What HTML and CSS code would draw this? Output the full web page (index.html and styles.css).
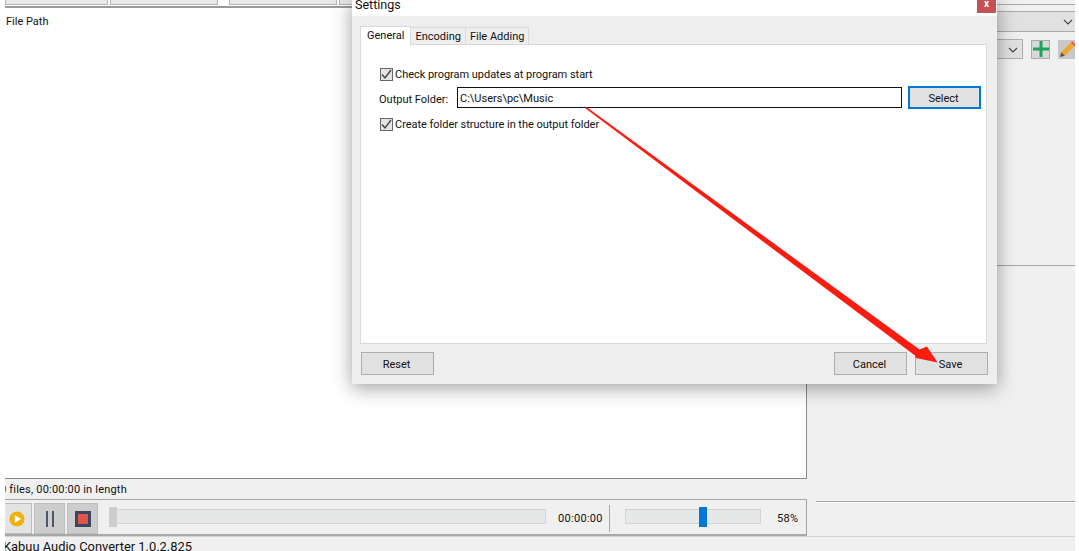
FILE: index.html
```html
<!DOCTYPE html>
<html lang="en">
<head>
<meta charset="utf-8">
<title>Kabuu Audio Converter</title>
<link rel="stylesheet" href="styles.css">
</head>
<body>
<div class="app">
  <div class="main">
    <section class="left">
      <div class="col-head">
        <span class="col w103"></span><span class="col w108"></span><span class="col-gap"></span><span class="col w108"></span><span class="col grow"></span>
      </div>
      <div class="list"><span class="col-title">File Path</span></div>
      <div class="files"><span class="files-text">0 files, 00:00:00 in length</span></div>
      <div class="player">
        <button class="pbtn play" aria-label="Play"><svg width="16" height="16" viewBox="0 0 18 18"><circle cx="9" cy="9" r="8.500" fill="#eeb111"/><path d="M6.5 4.5 13.500 9 6.500 13.500Z" fill="#fff"/></svg></button>
        <button class="pbtn" aria-label="Pause"><svg width="12" height="18" viewBox="0 0 12 18"><path d="M2 1h2v16H2zM8 1h2v16H8z" fill="#4a5568"/></svg></button>
        <button class="pbtn" aria-label="Stop"><svg width="16" height="16" viewBox="0 0 16 16"><rect x="1.500" y="1.500" width="13" height="13" fill="#e0574a" stroke="#3d4660" stroke-width="3"/></svg></button>
        <div class="track seek"><span class="seek-thumb"></span></div>
        <span class="time">00:00:00</span>
        <span class="vsep"></span>
        <div class="track volume"><span class="vol-thumb"></span></div>
        <span class="pct">58%</span>
      </div>
    </section>
    <aside class="right">
      <div class="rule-top"></div>
      <div class="select wide"><svg class="chev" width="10" height="6" viewBox="0 0 10 6"><path d="M1 1l4 4 4-4" fill="none" stroke="#444" stroke-width="1.1"/></svg></div>
      <div class="tools">
        <div class="select narrow"><svg class="chev" width="10" height="6" viewBox="0 0 10 6"><path d="M1 1l4 4 4-4" fill="none" stroke="#444" stroke-width="1.1"/></svg></div>
        <span class="tool"><svg width="16" height="16" viewBox="0 0 16 16"><path d="M6.500 0h3v6.500H16v3H9.500V16h-3V9.500H0v-3h6.500Z" fill="#1fa35b"/></svg></span>
        <span class="tool clipped"><svg width="17" height="17" viewBox="0 0 17 17"><path d="M1 16l1.300-4.800L12 1.500l3.500 3.500-9.700 9.700Z" fill="#f3a42c"/><path d="M12 1.500l1.300-1.300 3.500 3.500-1.300 1.300Z" fill="#d9534f"/><path d="M1 16l1.300-4.800 3.500 3.500Z" fill="#555"/></svg></span>
      </div>
      <div class="rule-mid"></div>
      <div class="rule-low"></div>
    </aside>
  </div>
  <footer class="bottom"><span class="version">Kabuu Audio Converter 1.0.2.825</span><span class="grip"></span></footer>
</div>

<div class="dialog">
  <div class="titlebar"><span class="dtitle">Settings</span><span class="close">x</span></div>
  <div class="dbody">
    <div class="tabs">
      <span class="tab active">General</span><span class="tab">Encoding</span><span class="tab">File Adding</span>
    </div>
    <div class="panel">
      <label class="check"><span class="box"><svg width="13" height="13" viewBox="0 0 13 13"><path d="M2 6.500 5 10l6-8" fill="none" stroke="#444" stroke-width="1.400"/></svg></span>Check program updates at program start</label>
      <div class="folder">
        <span class="flabel">Output Folder:</span>
        <span class="path">C:\Users\pc\Music</span>
        <button class="btn select-btn">Select</button>
      </div>
      <label class="check"><span class="box"><svg width="13" height="13" viewBox="0 0 13 13"><path d="M2 6.500 5 10l6-8" fill="none" stroke="#444" stroke-width="1.400"/></svg></span>Create folder structure in the output folder</label>
    </div>
    <div class="actions">
      <button class="btn">Reset</button>
      <span class="spacer"></span>
      <button class="btn">Cancel</button>
      <button class="btn">Save</button>
    </div>
  </div>
</div>

<svg class="arrow" width="1079" height="551" viewBox="0 0 1079 551"><path d="M585 108 586.500 107 919.500 349.500 927 346.500 937.500 362.500 916 358 915 355.500 Z" fill="#fb1c10"/></svg>
</body>
</html>
```

FILE: styles.css
```css
* { box-sizing: border-box; }
html, body { margin: 0; height: 100%; }
body {
  width: 1079px;
  height: 551px;
  overflow: hidden;
  background: #fff;
  font-family: Roboto, "Liberation Sans", sans-serif;
  font-size: 11px;
  color: #111;
}
button { font: inherit; color: inherit; padding: 1px 2px 0 0; }

.app { width: 1070px; height: 551px; margin-left: 5px; background: #f0f0f0; display: flex; flex-direction: column; overflow: hidden; }
.main { height: 536px; display: flex; }

.left { width: 802px; flex: none; display: flex; flex-direction: column; }
.col-head { height: 8px; display: flex; gap: 2px; border-bottom: 2px solid #9a9a9a; background: #fff; }
.col { height: 5px; background: #e8e8e8; border: 1px solid #b5b5b5; border-top: 0; }
.w103 { width: 103px; }
.w108 { width: 108px; }
.col-gap { width: 7px; }
.grow { flex: 1; }
.list { flex: 1; background: #fff; border-right: 1px solid #8a8a8a; border-bottom: 1px solid #8a8a8a; padding: 6px 1px; line-height: 16px; }
.files { height: 21px; padding-top: 1px; line-height: 20px; border-bottom: 1px solid #a5a5a5; overflow: hidden; }
.files-text { display: block; margin-left: -5px; letter-spacing: .2px; }
.player { height: 36px; padding-top: 3px; display: flex; align-items: center; border-right: 1px solid #a0a0a0; border-bottom: 2px solid #a8a8a8; }
.pbtn { width: 31px; height: 31px; margin-right: 2px; padding: 0; background: #cdcdcd; border: 1px solid #bdbdbd; display: flex; align-items: center; justify-content: center; }
.pbtn.play { width: 27px; padding-right: 3px; background: #e3e3e3; border-left: 0; }
.track { position: relative; height: 15px; margin-bottom: 4px; background: #e6e8e8; border: 1px solid #d4d4d4; }
.seek { width: 437px; margin-left: 9px; }
.seek-thumb { position: absolute; left: -1px; top: -3px; width: 8px; height: 20px; background: #cdcdcd; }
.time { margin-left: 12px; width: 46px; letter-spacing: .3px; }
.vsep { width: 1px; height: 27px; margin-left: 5px; background: #a8a8a8; }
.volume { width: 136px; margin-left: 15px; }
.vol-thumb { position: absolute; left: 73px; top: -3px; width: 8px; height: 20px; background: #0078d7; }
.pct { margin-left: 16px; letter-spacing: .3px; }

.right { flex: 1; min-width: 0; padding-left: 9px; display: flex; flex-direction: column; }
.rule-top { height: 8px; margin-top: 4px; border-top: 1px solid #aaa; border-bottom: 1px solid #aaa; }
.select { position: relative; height: 20px; background: #e1e1e1; border-bottom: 1px solid #aaa; }
.chev { position: absolute; right: 2px; top: 7px; }
.tools { display: flex; align-items: center; gap: 8px; height: 20px; margin-top: 7px; }
.narrow { width: 207px; flex: none; border: 1px solid #adadad; }
.narrow .chev { right: 4px; }
.tool { width: 19px; height: 19px; flex: none; background: #d8d8d8; border: 1px solid #aaa; display: flex; align-items: center; justify-content: center; }
.tool.clipped { background: #c8c8c8; border: 0; }
.rule-mid { margin-top: 206px; height: 1px; background: #a5a5a5; }
.rule-low { margin-top: 235px; height: 2px; background: #a5a5a5; border-bottom: 1px solid #fff; }

.bottom { flex: 1; position: relative; border-top: 1px solid #d5d5d5; overflow: hidden; }
.version { display: block; margin-left: -2px; font-size: 12.900px; line-height: 19px; }
.grip { position: absolute; right: 0; bottom: 1px; width: 5px; height: 5px; background: radial-gradient(#b5b5b5 35%, transparent 40%) 0 0 / 2px 2px; }

.dialog { position: absolute; left: 352px; top: -1px; width: 645px; height: 385px; background: #eee; display: flex; flex-direction: column; box-shadow: 0 4px 18px rgba(0,0,0,.38); }
.titlebar { height: 18px; background: #fff; position: relative; overflow: hidden; }
.dtitle { display: block; margin: -3px 0 0 3px; font-size: 12.500px; line-height: 18px; }
.close { position: absolute; right: 1px; top: 0; width: 19px; height: 14px; background: #c75050; color: #fff; font-weight: 700; font-size: 10px; line-height: 10px; text-align: center; }
.dbody { flex: 1; display: flex; flex-direction: column; padding: 9px; padding-left: 8px; }
.tabs { display: flex; align-items: flex-end; height: 19px; padding-left: 0; }
.tab { height: 17px; padding: 0 4px; line-height: 18px; background: #eee; border: 1px solid #d9d9d9; border-bottom: 0; margin-left: -1px; }
.tab.active { height: 19px; line-height: 18px; padding: 0 6px; background: #fff; margin-left: 0; position: relative; z-index: 1; margin-bottom: -1px; }
.panel { width: 627px; height: 300px; background: #fff; border: 1px solid #d9d9d9; padding: 21px 5px 0 19px; display: flex; flex-direction: column; }
.check { display: flex; align-items: center; gap: 2px; height: 16px; letter-spacing: -.03px; }
.box { width: 13px; height: 13px; flex: none; background: #e4e4e4; border: 1px solid #666; display: flex; align-items: center; justify-content: center; }
.box svg { flex: none; }
.folder { display: flex; align-items: center; height: 24px; margin: 3px 0 7px; }
.flabel { width: 78px; margin-left: -1px; padding-top: 4px; flex: none; }
.path { width: 445px; height: 21px; flex: none; border: 1px solid #111; padding: 2px 0 0 2px; line-height: 18px; }
.btn { width: 73px; height: 23px; background: #e1e1e1; border: 1px solid #adadad; }
.select-btn { margin-left: 6px; padding-top: 3px; border: 2px solid #0078d7; }
.actions { display: flex; gap: 8px; margin: 8px 0 0 1px; }
.spacer { flex: 1; }
.arrow { position: absolute; left: 0; top: 0; pointer-events: none; }
```
